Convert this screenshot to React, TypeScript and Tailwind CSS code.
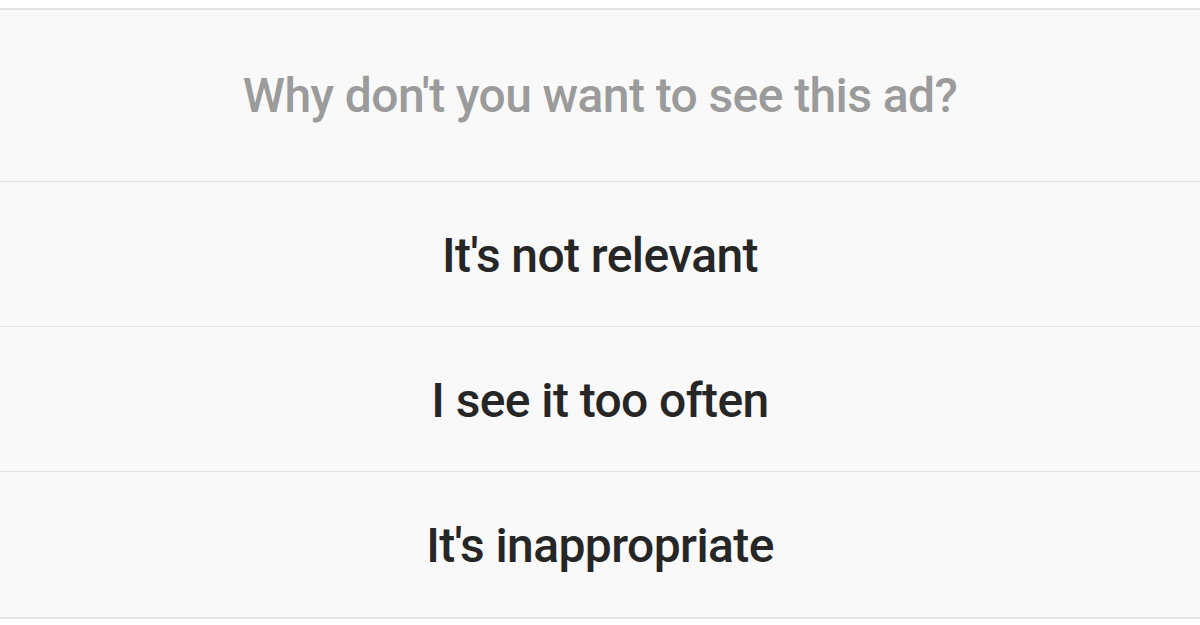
export default function App() {
  const items = ["It's not relevant", "I see it too often", "It's inappropriate"];
  return (
    <div
      className="w-[1200px] h-[625px] bg-white overflow-hidden"
      style={{ fontFamily: "Roboto, 'Noto Sans', sans-serif" }}
    >
      <div className="mt-[8px] border-t-[2px] border-b-[2px] border-[#e4e4e4] bg-[#f9f9f9]">
        <div className="h-[172px] flex items-center justify-center border-b border-[#e2e2e2]">
          <span className="text-[48px] leading-none text-[#9b9b9b] font-medium tracking-[-0.6px]">
            Why don't you want to see this ad?
          </span>
        </div>
        {items.map((t, i) => (
          <div
            key={t}
            className={`h-[145px] flex items-center justify-center pt-[3px] ${i < items.length - 1 ? "border-b border-[#e2e2e2]" : ""}`}
          >
            <span className="text-[48px] leading-none text-[#262626] font-medium tracking-[-0.6px]">{t}</span>
          </div>
        ))}
      </div>
    </div>
  );
}
